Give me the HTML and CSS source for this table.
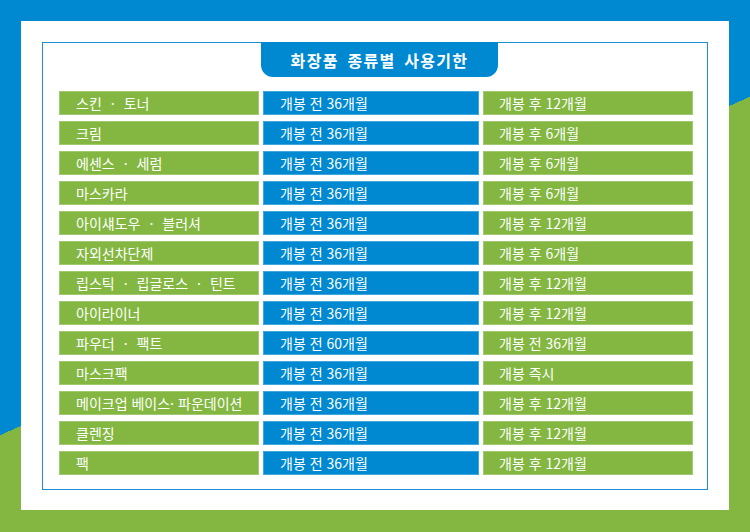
FILE: index.html
```html
<!DOCTYPE html>
<html lang="ko">
<head>
<meta charset="utf-8">
<title>화장품 종류별 사용기한</title>
<link rel="stylesheet" href="styles.css">
</head>
<body>
<div class="page">
  <div class="panel">
    <div class="frame">
      <h1 class="title">화장품 종류별 사용기한</h1>
      <div class="table">
        <div class="cell c1">스킨<span class="dot">·</span>토너</div><div class="cell c2">개봉 전 36개월</div><div class="cell c3">개봉 후 12개월</div>
        <div class="cell c1">크림</div><div class="cell c2">개봉 전 36개월</div><div class="cell c3">개봉 후 6개월</div>
        <div class="cell c1">에센스<span class="dot">·</span>세럼</div><div class="cell c2">개봉 전 36개월</div><div class="cell c3">개봉 후 6개월</div>
        <div class="cell c1">마스카라</div><div class="cell c2">개봉 전 36개월</div><div class="cell c3">개봉 후 6개월</div>
        <div class="cell c1">아이섀도우<span class="dot">·</span>블러셔</div><div class="cell c2">개봉 전 36개월</div><div class="cell c3">개봉 후 12개월</div>
        <div class="cell c1">자외선차단제</div><div class="cell c2">개봉 전 36개월</div><div class="cell c3">개봉 후 6개월</div>
        <div class="cell c1">립스틱<span class="dot">·</span>립글로스<span class="dot">·</span>틴트</div><div class="cell c2">개봉 전 36개월</div><div class="cell c3">개봉 후 12개월</div>
        <div class="cell c1">아이라이너</div><div class="cell c2">개봉 전 36개월</div><div class="cell c3">개봉 후 12개월</div>
        <div class="cell c1">파우더<span class="dot">·</span>팩트</div><div class="cell c2">개봉 전 60개월</div><div class="cell c3">개봉 전 36개월</div>
        <div class="cell c1">마스크팩</div><div class="cell c2">개봉 전 36개월</div><div class="cell c3">개봉 즉시</div>
        <div class="cell c1">메이크업 베이스<span class="dot tight">·</span>파운데이션</div><div class="cell c2">개봉 전 36개월</div><div class="cell c3">개봉 후 12개월</div>
        <div class="cell c1">클렌징</div><div class="cell c2">개봉 전 36개월</div><div class="cell c3">개봉 후 12개월</div>
        <div class="cell c1">팩</div><div class="cell c2">개봉 전 36개월</div><div class="cell c3">개봉 후 12개월</div>
      </div>
    </div>
  </div>
</div>
</body>
</html>
```

FILE: styles.css
```css
html, body {
  margin: 0;
  padding: 0;
}
body {
  width: 750px;
  height: 532px;
  overflow: hidden;
  font-family: "Noto Sans CJK KR", "Noto Sans", sans-serif;
}
.page {
  width: 750px;
  height: 532px;
  box-sizing: border-box;
  padding: 21px;
  background: linear-gradient(155.7deg, #0089d0 50%, #84b741 50%);
}
.panel {
  width: 708px;
  height: 489px;
  box-sizing: border-box;
  background: #fff;
  padding: 21px;
}
.frame {
  width: 666px;
  height: 448px;
  box-sizing: border-box;
  border: 1px solid #1a8fd4;
  display: flex;
  flex-direction: column;
}
.title {
  margin: -1px 0 0 218px;
  width: 237px;
  height: 35px;
  box-sizing: border-box;
  background: #0089d0;
  border-radius: 0 0 12px 12px;
  color: #fff;
  font-size: 16px;
  font-weight: 700;
  letter-spacing: 1.3px;
  word-spacing: 3px;
  display: flex;
  align-items: center;
  justify-content: center;
  line-height: 1;
}
.table {
  margin: 14px 0 0 16px;
  display: grid;
  grid-template-columns: 200px 216px 210px;
  grid-auto-rows: 24px;
  column-gap: 4px;
  row-gap: 6px;
}
.cell {
  color: #fff;
  font-size: 14px;
  line-height: 24px;
  padding-left: 17px;
  white-space: nowrap;
  overflow: hidden;
  box-shadow: inset 0 0 0 1px rgba(255, 255, 255, 0.25);
}
.dot {
  margin: 0 9px;
}
.dot.tight {
  margin: 0 4px 0 0;
}
.c1, .c3 {
  background: #84b741;
}
.c2 {
  background: #0089d0;
}
.c3 {
  padding-left: 16px;
}
```
